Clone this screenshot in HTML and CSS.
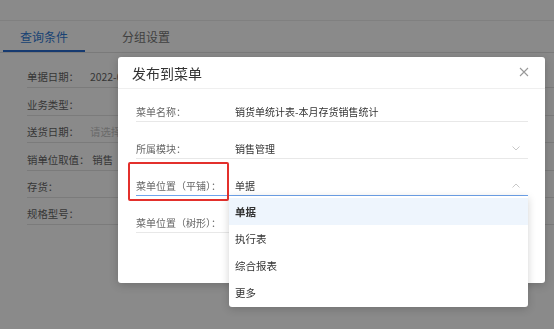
FILE: index.html
```html
<!DOCTYPE html>
<html lang="zh-CN">
<head>
  <meta charset="UTF-8" />
  <title>发布到菜单</title>
  <link rel="stylesheet" href="styles.css">
</head>
<body>
  <div class="page">
    <div class="topbar"></div>
    <div class="tabs">
      <span class="tab active">查询条件</span>
      <span class="tab">分组设置</span>
    </div>
    <div class="filters">
      <div class="filter"><span class="f-label">单据日期：</span><span class="f-value">2022-06</span></div>
      <div class="filter"><span class="f-label">业务类型：</span></div>
      <div class="filter"><span class="f-label">送货日期：</span><span class="f-value placeholder">请选择</span></div>
      <div class="filter"><span class="f-label">销单位取值：</span><span class="f-value">销售</span></div>
      <div class="filter"><span class="f-label">存货：</span></div>
      <div class="filter"><span class="f-label">规格型号：</span></div>
    </div>
  </div>

  <div class="mask"></div>

  <div class="dialog">
    <div class="dialog-head">
      <span class="dialog-title">发布到菜单</span>
      <svg class="close" width="10" height="10" viewBox="0 0 10 10">
        <path d="M1 1 L9 9 M9 1 L1 9" stroke="#999" stroke-width="1.1" fill="none" />
      </svg>
    </div>
    <div class="dialog-body">
      <div class="field">
        <span class="label">菜单名称：</span>
        <span class="value">销货单统计表-本月存货销售统计</span>
      </div>
      <div class="field">
        <span class="label">所属模块：</span>
        <span class="value">销售管理</span>
        <svg class="arrow" width="8" height="5" viewBox="0 0 8 5">
          <polyline points="0.5,0.5 4,4 7.5,0.5" stroke="#c8c8c8" stroke-width="1" fill="none" />
        </svg>
      </div>
      <div class="field open">
        <span class="label">菜单位置（平铺）：</span>
        <span class="value">单据</span>
        <svg class="arrow" width="8" height="5" viewBox="0 0 8 5">
          <polyline points="0.5,4.5 4,1 7.5,4.5" stroke="#c8c8c8" stroke-width="1" fill="none" />
        </svg>
        <div class="marker"></div>
        <ul class="options">
          <li class="selected">单据</li>
          <li>执行表</li>
          <li>综合报表</li>
          <li>更多</li>
        </ul>
      </div>
      <div class="field">
        <span class="label">菜单位置（树形）：</span>
      </div>
    </div>
  </div>
</body>
</html>
```

FILE: styles.css
```css
body {
  margin: 0;
  font-family: "Noto Sans CJK SC", "Noto Sans", sans-serif;
  background: #fff;
  color: #333;
  overflow: hidden;
}

/* page behind the dialog */
.page {
  height: 329px;
}
.topbar {
  height: 20px;
  border-bottom: 1px solid #ececec;
}
.tabs {
  display: flex;
  padding-left: 3px;
  border-bottom: 1px solid #e2e2e2;
}
.tab {
  font-size: 12px;
  line-height: 26px;
  padding: 3px 17px 0;
  border-bottom: 2px solid transparent;
  color: #777;
}
.tab + .tab {
  margin-left: 20px;
}
.tab.active {
  color: #2f7ad6;
  border-bottom-color: #2a6cd0;
}
.filters {
  padding: 8px 0 0 27px;
}
.filter {
  display: flex;
  height: 20px;
  padding-top: 6.4px;
  line-height: 20px;
  font-size: 10.4px;
  font-family: "Noto Sans CJK TC", "Noto Sans CJK SC", sans-serif;
  border-bottom: 1px solid #e4e4e4;
  color: #666;
}
.f-label {
  min-width: 60px;
  margin-right: 3px;
  white-space: nowrap;
}
.f-value {
  color: #666;
  white-space: nowrap;
}
.f-value.placeholder {
  color: #c4c4c4;
}

.mask {
  position: fixed;
  inset: 0;
  background: rgba(0, 0, 0, 0.46);
}

/* dialog */
.dialog {
  position: absolute;
  left: 118px;
  top: 57px;
  width: 427px;
  height: 226px;
  background: #fff;
  border-radius: 3px;
  box-shadow: 0 2px 10px rgba(0, 0, 0, 0.2);
}
.dialog-head {
  display: flex;
  align-items: center;
  justify-content: space-between;
  height: 31px;
  padding: 0 16px 0 14px;
  border-bottom: 1px solid #efefef;
}
.dialog-title {
  font-size: 14px;
  color: #333;
  padding-top: 1px;
}
.close {
  margin-top: -2px;
}
.dialog-body {
  padding: 0 17px 0 18px;
}
.field {
  position: relative;
  display: flex;
  align-items: center;
  height: 20px;
  padding-top: 16px;
  font-size: 10px;
  border-bottom: 1px solid #e8e8e8;
}
.field:first-child {
  padding-top: 12px;
}
.field.open {
  border-bottom-color: #6ea4ee;
}
.label {
  width: 99px;
  flex: none;
  color: #666;
  white-space: nowrap;
  font-family: "Noto Sans CJK TC", "Noto Sans CJK SC", sans-serif;
}
.value {
  flex: 1;
  color: #333;
  white-space: nowrap;
}
.arrow {
  margin-right: 8px;
}
.marker {
  position: absolute;
  left: -8px;
  top: 3px;
  width: 97px;
  height: 35px;
  border: 2px solid #e3302c;
  border-radius: 2px;
}
.options {
  position: absolute;
  left: 93px;
  top: 37px;
  width: 299px;
  margin: 0;
  padding: 2px 0 1px;
  list-style: none;
  background: #fff;
  border-radius: 0 0 3px 3px;
  box-shadow: 0 2px 8px rgba(0, 0, 0, 0.18);
  z-index: 2;
}
.options li {
  height: 27px;
  line-height: 27px;
  padding-left: 6px;
  font-size: 10.5px;
  color: #333;
}
.options li.selected {
  background: #eef5fd;
  font-weight: bold;
}
```
